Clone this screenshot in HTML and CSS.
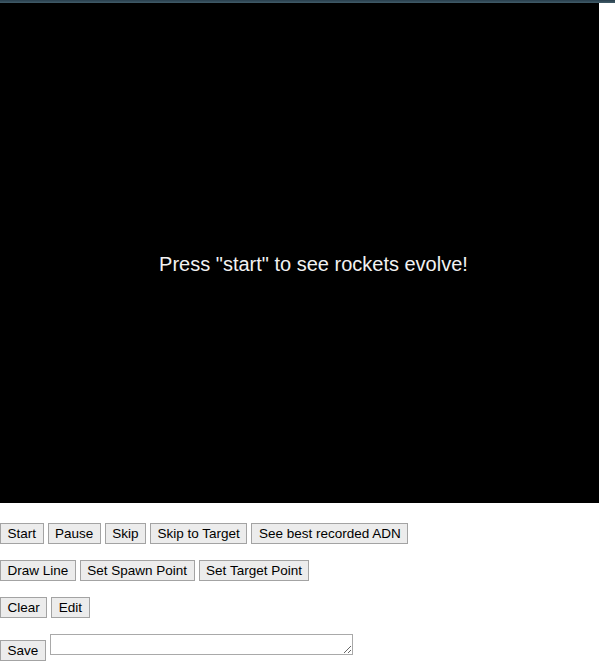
FILE: index.html
```html
<!DOCTYPE html>
<html>
<head>
<meta charset="utf-8">
<title>Rockets</title>
<link rel="stylesheet" href="styles.css">
</head>
<body>
<div class="topbar"></div>
<div class="stage">
  <div class="screen"><span class="message">Press "start" to see rockets evolve!</span></div>
</div>
<p class="controls"><button class="btn">Start</button> <button class="btn">Pause</button> <button class="btn">Skip</button> <button class="btn">Skip to Target</button> <button class="btn">See best recorded ADN</button></p>
<p class="controls"><button class="btn">Draw Line</button> <button class="btn">Set Spawn Point</button> <button class="btn">Set Target Point</button></p>
<p class="controls"><button class="btn">Clear</button> <button class="btn">Edit</button></p>
<p class="controls"><button class="btn">Save</button> <textarea class="dna" rows="1"></textarea></p>
</body>
</html>
```
FILE: styles.css
```css
html, body {
  margin: 0;
  padding: 0;
  background: #ffffff;
  font-family: "Liberation Sans", Arial, sans-serif;
}

.topbar {
  height: 3px;
  background: linear-gradient(to bottom, #2c4351 0, #2c4351 1px, #3d5764 2px, #3d5764 3px);
}

.stage {
  padding-bottom: 4px;
}

.screen {
  width: 599px;
  height: 500px;
  background: #000000;
  display: flex;
  align-items: center;
  justify-content: center;
  padding-left: 28px;
  padding-top: 22px;
  box-sizing: border-box;
}

.message {
  color: #f2f2f2;
  font-family: "Liberation Sans", Arial, sans-serif;
  font-size: 20px;
}

.controls {
  margin: 16px 0;
  font-size: 16px;
  word-spacing: -0.45px;
}

.btn {
  font-family: "Liberation Sans", Arial, sans-serif;
  font-size: 13.5px;
  word-spacing: normal;
  color: #000000;
  background: #ececec;
  border: 1px solid #a3a3a3;
  border-radius: 0;
  padding: 0 6.5px;
  margin: 0;
  height: 21px;
  line-height: 19px;
  box-sizing: border-box;
}

.dna {
  width: 303px;
  height: 21px;
  box-sizing: border-box;
  border: 1px solid #a9a9a9;
  padding: 2px;
  margin: 0;
  font-family: "Liberation Mono", monospace;
  font-size: 13.3333px;
  vertical-align: baseline;
}
```
